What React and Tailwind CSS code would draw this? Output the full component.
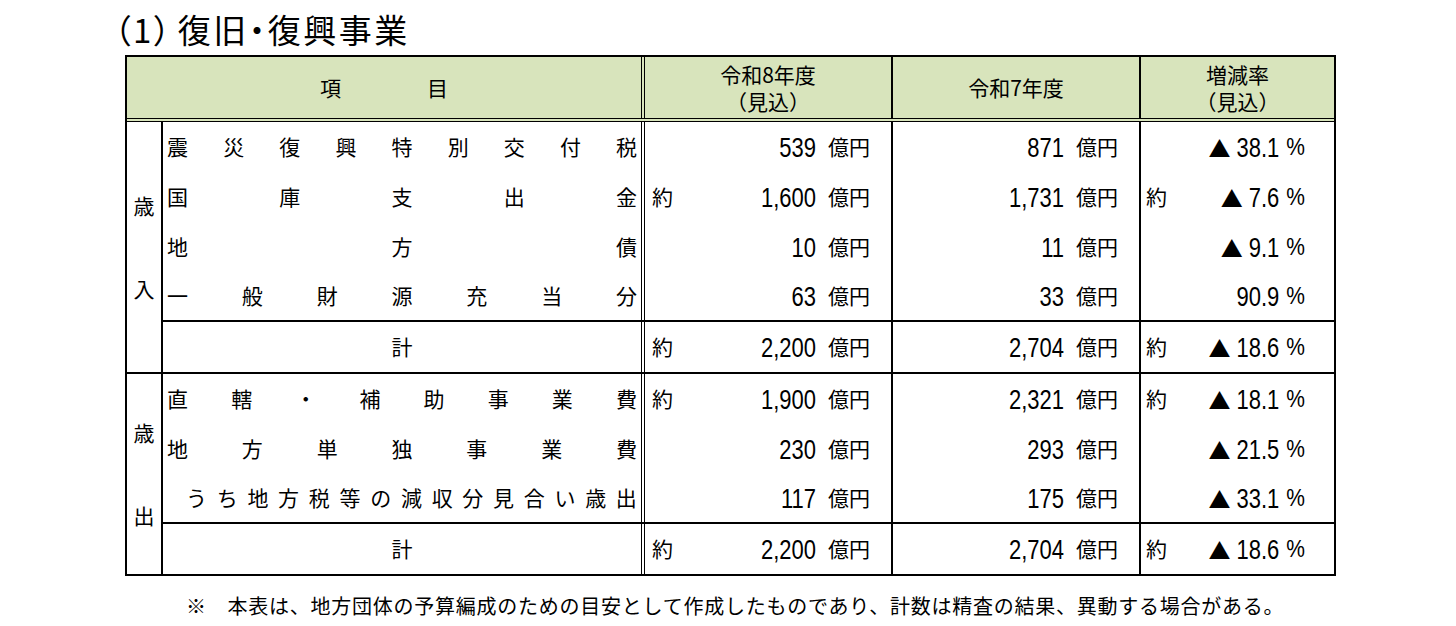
const num = "inline-block font-['Liberation_Sans_Narrow','Liberation_Sans',sans-serif] text-[22px] scale-y-[1.25]";

const revenue = [
    { item: ['震', '災', '復', '興', '特', '別', '交', '付', '税'], y8: '539', y7: '871', rate: '38.1', down: true },
    { item: ['国', '庫', '支', '出', '金'], about8: true, y8: '1,600', y7: '1,731', aboutR: true, rate: '7.6', down: true },
    { item: ['地', '方', '債'], y8: '10', y7: '11', rate: '9.1', down: true },
    { item: ['一', '般', '財', '源', '充', '当', '分'], y8: '63', y7: '33', rate: '90.9' },
];

const expenditure = [
    { item: ['直', '轄', '・', '補', '助', '事', '業', '費'], about8: true, y8: '1,900', y7: '2,321', aboutR: true, rate: '18.1', down: true },
    { item: ['地', '方', '単', '独', '事', '業', '費'], y8: '230', y7: '293', rate: '21.5', down: true },
    { item: 'うち地方税等の減収分見合い歳出'.split(''), indent: true, y8: '117', y7: '175', rate: '33.1', down: true },
];

const total = { total: true, about8: true, y8: '2,200', y7: '2,704', aboutR: true, rate: '18.6', down: true };

function Amount({ about, value }) {
    return (
        <div className="w-[248px] flex items-center pl-[7px] pr-[21px] border-r-2 border-black">
            {about && <span>約</span>}
            <span className={`ml-auto ${num}`}>{value}</span>
            <span className="ml-[12px]">億円</span>
        </div>
    );
}

function Row({ row, divider }) {
    return (
        <div className={`flex h-[50px] ${divider ? 'border-b-2 border-black' : ''}`}>
            <div
                className={`w-[482px] border-r-4 border-double border-black flex items-center pr-[4px] ${
                    row.total ? 'justify-center' : 'justify-between'
                } ${row.indent ? 'pl-[23px]' : 'pl-[4px]'}`}
            >
                {row.total ? <span>計</span> : row.item.map((c, i) => <span key={i}>{c}</span>)}
            </div>
            <Amount about={row.about8} value={row.y8} />
            <Amount value={row.y7} />
            <div className="flex-1 flex items-center pl-[5px] pr-[29px]">
                {row.aboutR && <span>約</span>}
                <span className="ml-auto flex items-center">
                    {row.down && <span className="text-[22px] mr-[6px]">▲</span>}
                    <span className={num}>{row.rate}</span>
                    <span className="ml-[7px] inline-block font-['Liberation_Sans',sans-serif] text-[21px] scale-y-[1.15]">%</span>
                </span>
            </div>
        </div>
    );
}

function Section({ label, rows, last }) {
    return (
        <div className={`flex ${last ? '' : 'border-b-2 border-black'}`}>
            <div className="w-[36px] border-r-2 border-black flex flex-col items-center justify-center gap-[62px]">
                {label.map((c) => (
                    <span key={c} className="leading-[21px]">{c}</span>
                ))}
            </div>
            <div className="flex-1 flex flex-col">
                {rows.map((r, i) => (
                    <Row key={i} row={r} divider={i === rows.length - 1} />
                ))}
                <Row row={total} />
            </div>
        </div>
    );
}

export default function App() {
    return (
        <div className="w-[1456px] h-[626px] bg-white text-black font-['Noto_Sans_CJK_JP',sans-serif] pt-[10px]">
            {/* title: proportional brackets and dot, like the original */}
            <h1 className="pl-[114px] text-[33px] leading-[38px] font-normal tracking-[2.5px] [font-feature-settings:'palt'] flex items-center">
                <span>（1）</span>
                <span className="ml-[5px]">復旧・復興事業</span>
            </h1>
            <div className="ml-[125px] mt-[7px] w-[1211px] border-2 border-black text-[21px]">
                <div className="flex h-[65px] bg-[#d8e4bc] border-b-4 border-double border-black">
                    <div className="w-[518px] border-r-4 border-double border-black flex items-center justify-center gap-[86px]">
                        <span>項</span>
                        <span>目</span>
                    </div>
                    <div className="w-[248px] border-r-2 border-black flex items-center justify-center">
                        <p className="leading-[27px] text-center">
                            令和8年度
                            <br />
                            （見込）
                        </p>
                    </div>
                    <div className="w-[248px] border-r-2 border-black flex items-center justify-center">
                        <span>令和7年度</span>
                    </div>
                    <div className="flex-1 flex items-center justify-center">
                        <p className="leading-[27px] text-center">
                            増減率
                            <br />
                            （見込）
                        </p>
                    </div>
                </div>
                <Section label={['歳', '入']} rows={revenue} />
                <Section label={['歳', '出']} rows={expenditure} last />
            </div>
            <p className="pl-[186px] mt-[18px] text-[20px] leading-[24px] tracking-[0.75px]">
                ※　本表は、地方団体の予算編成のための目安として作成したものであり、計数は精査の結果、異動する場合がある。
            </p>
        </div>
    );
}
